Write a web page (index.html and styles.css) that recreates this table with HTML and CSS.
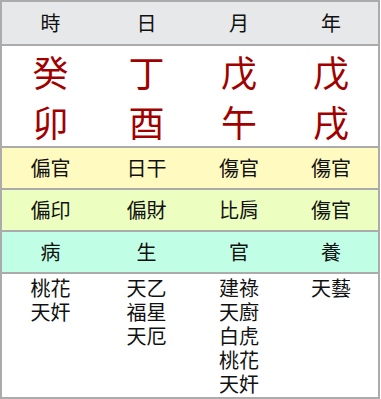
FILE: index.html
```html
<!DOCTYPE html>
<html lang="zh-Hant">
<head>
<meta charset="utf-8">
<title>命盤</title>
<link rel="stylesheet" href="styles.css">
</head>
<body>
<div class="chart">
  <div class="row head">
    <div class="cell">時</div>
    <div class="cell">日</div>
    <div class="cell">月</div>
    <div class="cell">年</div>
  </div>
  <div class="row pillars">
    <div class="cell"><span>癸</span><span>卯</span></div>
    <div class="cell"><span>丁</span><span>酉</span></div>
    <div class="cell"><span>戊</span><span>午</span></div>
    <div class="cell"><span>戊</span><span>戌</span></div>
  </div>
  <div class="row band gods">
    <div class="cell">偏官</div>
    <div class="cell">日干</div>
    <div class="cell">傷官</div>
    <div class="cell">傷官</div>
  </div>
  <div class="row band hidden">
    <div class="cell">偏印</div>
    <div class="cell">偏財</div>
    <div class="cell">比肩</div>
    <div class="cell">傷官</div>
  </div>
  <div class="row band stage">
    <div class="cell">病</div>
    <div class="cell">生</div>
    <div class="cell">官</div>
    <div class="cell">養</div>
  </div>
  <div class="row stars">
    <div class="cell"><span>桃花</span><span>天奸</span></div>
    <div class="cell"><span>天乙</span><span>福星</span><span>天厄</span></div>
    <div class="cell"><span>建祿</span><span>天廚</span><span>白虎</span><span>桃花</span><span>天奸</span></div>
    <div class="cell"><span>天藝</span></div>
  </div>
</div>
</body>
</html>
```
FILE: styles.css
```css
html, body {
  margin: 0;
  padding: 0;
  background: #ffffff;
}
body {
  font-family: "Noto Sans CJK TC", "Noto Sans CJK SC", sans-serif;
  color: #111111;
}
.chart {
  box-sizing: border-box;
  width: 380px;
  height: 399px;
  border: 2px solid #ababab;
  display: flex;
  flex-direction: column;
}
.row {
  display: grid;
  grid-template-columns: 97px 95px 90px 94px;
  border-top: 2px solid #ababab;
}
.row.head {
  border-top: none;
  height: 42px;
  background: #e7e8ea;
}
.cell {
  display: flex;
  flex-direction: column;
  align-items: center;
  justify-content: center;
  font-size: 20px;
  line-height: 24px;
}
.pillars {
  height: 100px;
}
.pillars .cell {
  font-size: 36px;
  line-height: 50px;
  color: #a00000;
}
.band {
  height: 40px;
}
.gods { background: #fffac0; }
.hidden { background: #ecffc0; }
.stage { background: #c0ffe6; }
.stars {
  flex: 1;
}
.stars .cell {
  justify-content: flex-start;
  padding-top: 2px;
}
```
